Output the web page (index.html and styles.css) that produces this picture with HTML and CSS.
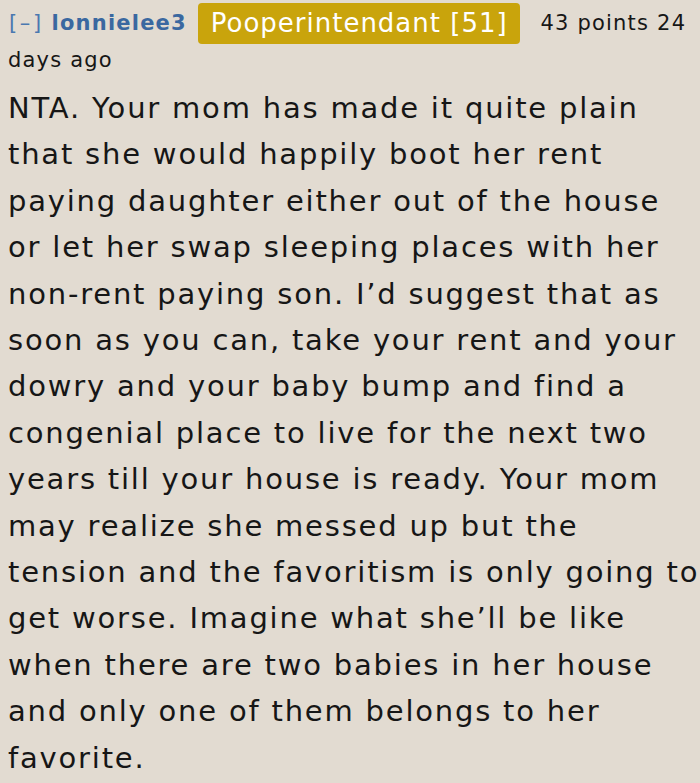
FILE: index.html
```html
<!DOCTYPE html>
<html>
<head>
<meta charset="utf-8">
<link rel="stylesheet" href="styles.css">
</head>
<body>
<div class="comment">
  <p class="tagline"><span class="expand">[–]</span> <span class="author">lonnielee3</span> <span class="flair">Pooperintendant [51]</span> <span class="score">43 points</span> <span class="time">24<br>days ago</span></p>
  <p class="body">NTA. Your mom has made it quite plain<br>that she would happily boot her rent<br>paying daughter either out of the house<br>or let her swap sleeping places with her<br>non-rent paying son. I’d suggest that as<br>soon as you can, take your rent and your<br>dowry and your baby bump and find a<br>congenial place to live for the next two<br>years till your house is ready. Your mom<br>may realize she messed up but the<br>tension and the favoritism is only going to<br>get worse. Imagine what she’ll be like<br>when there are two babies in her house<br>and only one of them belongs to her<br>favorite.</p>
</div>
</body>
</html>
```
FILE: styles.css
```css
html, body {
  margin: 0;
  padding: 0;
  background: #e2dbd1;
}
body {
  font-family: "DejaVu Sans", Verdana, sans-serif;
  color: #161616;
}
.comment {
  padding: 3px 8px 0 8px;
}
.tagline {
  margin: 0;
  font-size: 21px;
  line-height: 32px;
  letter-spacing: 1.2px;
  white-space: nowrap;
}
.expand {
  color: #4a78b0;
  letter-spacing: 2.6px;
  padding-left: 1px;
}
.author {
  color: #3a68a0;
  font-weight: bold;
  letter-spacing: 1.2px;
}
.flair {
  display: inline-block;
  background: #c9a40c;
  color: #ffffff;
  font-size: 26px;
  line-height: 41px;
  letter-spacing: 1px;
  padding: 0 12px 0 13px;
  border-radius: 4px;
  margin: 0 13px 0 3px;
  vertical-align: -2px;
}
.score, .time {
  color: #161616;
}
.body {
  margin: 9px 0 0 0;
  font-size: 29px;
  line-height: 46.4px;
  letter-spacing: 1.8px;
  white-space: nowrap;
}
```
